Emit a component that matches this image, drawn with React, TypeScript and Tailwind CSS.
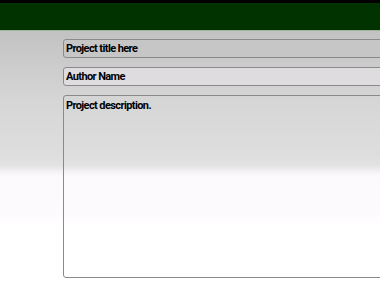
const App = () => {
  return (
    <div className="w-[380px] h-[285px] overflow-hidden font-['Roboto',sans-serif]">
      {/* Header */}
      <div className="h-[3px] bg-black" />
      <div className="h-[27px] bg-[#003300]" />
      <div className="h-px bg-[#9fb59f]" />

      {/* Form */}
      <div className="h-[254px] bg-[linear-gradient(to_bottom,#c2c2c2_0px,#d6d6d6_70px,#dedede_125px,#e2e2e2_134px,#fcf9fc_144px,#fefbfe_185px,#ffffff_195px)] pl-[63px] pt-[8px] flex flex-col gap-[9px]">
        <input
          type="text"
          placeholder="Project title here"
          className="w-[330px] h-[19px] px-[2px] bg-[#c6c6c6] border border-[#8a8a8a] rounded-[3px] text-[11px] tracking-[-0.6px] font-bold text-black placeholder:text-black outline-none"
        />
        <input
          type="text"
          placeholder="Author Name"
          className="w-[330px] h-[19px] px-[2px] bg-[#dedcdf] border border-[#8a8a8a] rounded-[3px] text-[11px] tracking-[-0.6px] font-bold text-black placeholder:text-black outline-none"
        />
        <textarea
          placeholder="Project description."
          className="w-[330px] h-[183px] px-[2px] py-[2px] bg-transparent border border-[#8a8a8a] rounded-[3px] text-[11px] tracking-[-0.6px] font-bold text-black placeholder:text-black outline-none resize-none"
        />
      </div>
    </div>
  );
};

export default App;
